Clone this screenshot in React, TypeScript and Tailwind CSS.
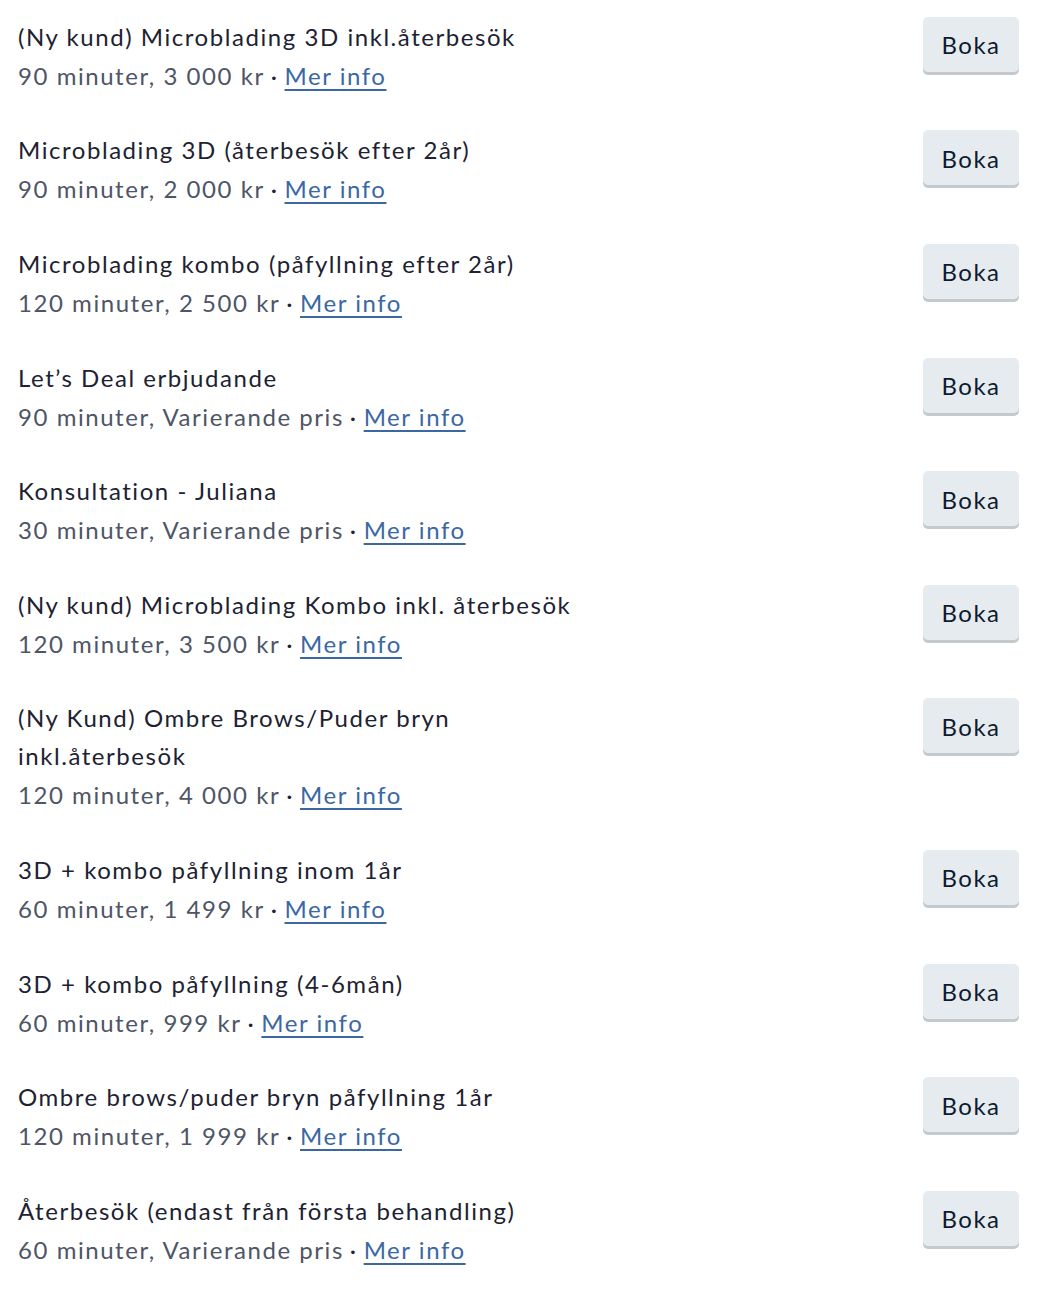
const services = [
  { name: "(Ny kund) Microblading 3D inkl.återbesök", info: "90 minuter, 3 000 kr" },
  { name: "Microblading 3D (återbesök efter 2år)", info: "90 minuter, 2 000 kr" },
  { name: "Microblading kombo (påfyllning efter 2år)", info: "120 minuter, 2 500 kr" },
  { name: "Let’s Deal erbjudande", info: "90 minuter, Varierande pris" },
  { name: "Konsultation - Juliana", info: "30 minuter, Varierande pris" },
  { name: "(Ny kund) Microblading Kombo inkl. återbesök", info: "120 minuter, 3 500 kr" },
  { name: "(Ny Kund) Ombre Brows/Puder bryn inkl.återbesök", info: "120 minuter, 4 000 kr" },
  { name: "3D + kombo påfyllning inom 1år", info: "60 minuter, 1 499 kr" },
  { name: "3D + kombo påfyllning (4-6mån)", info: "60 minuter, 999 kr" },
  { name: "Ombre brows/puder bryn påfyllning 1år", info: "120 minuter, 1 999 kr" },
  { name: "Återbesök (endast från första behandling)", info: "60 minuter, Varierande pris" },
];

function ServiceRow({ name, info }: { name: string; info: string }) {
  return (
    <div className="flex items-start justify-between py-[17.8px]">
      <div className="max-w-[590px]">
        <div className="text-[24px] leading-[38px] text-[#1d2232] tracking-[1.55px]">{name}</div>
        <div className="text-[24px] leading-[40px] text-[#4e5566] tracking-[1.55px]">
          {info}
          <span className="text-[#1d2232] mx-[6px]">·</span>
          <a href="#" className="text-[#3b68a3] underline decoration-2 underline-offset-[4px]">
            Mer info
          </a>
        </div>
      </div>
      <button className="w-[96px] h-[55px] pt-[2px] rounded-[5px] bg-[#e6ebef] shadow-[0_3px_0_#c3c9cd] text-[24px] text-[#0e1a2e] tracking-[1.5px] mt-[-1px]">
        Boka
      </button>
    </div>
  );
}

export default function App() {
  return (
    <div className="bg-white pl-[18px] pr-[45px] font-['Lato','Noto_Sans',sans-serif]">
      {services.map((s) => (
        <ServiceRow key={s.name} name={s.name} info={s.info} />
      ))}
    </div>
  );
}
